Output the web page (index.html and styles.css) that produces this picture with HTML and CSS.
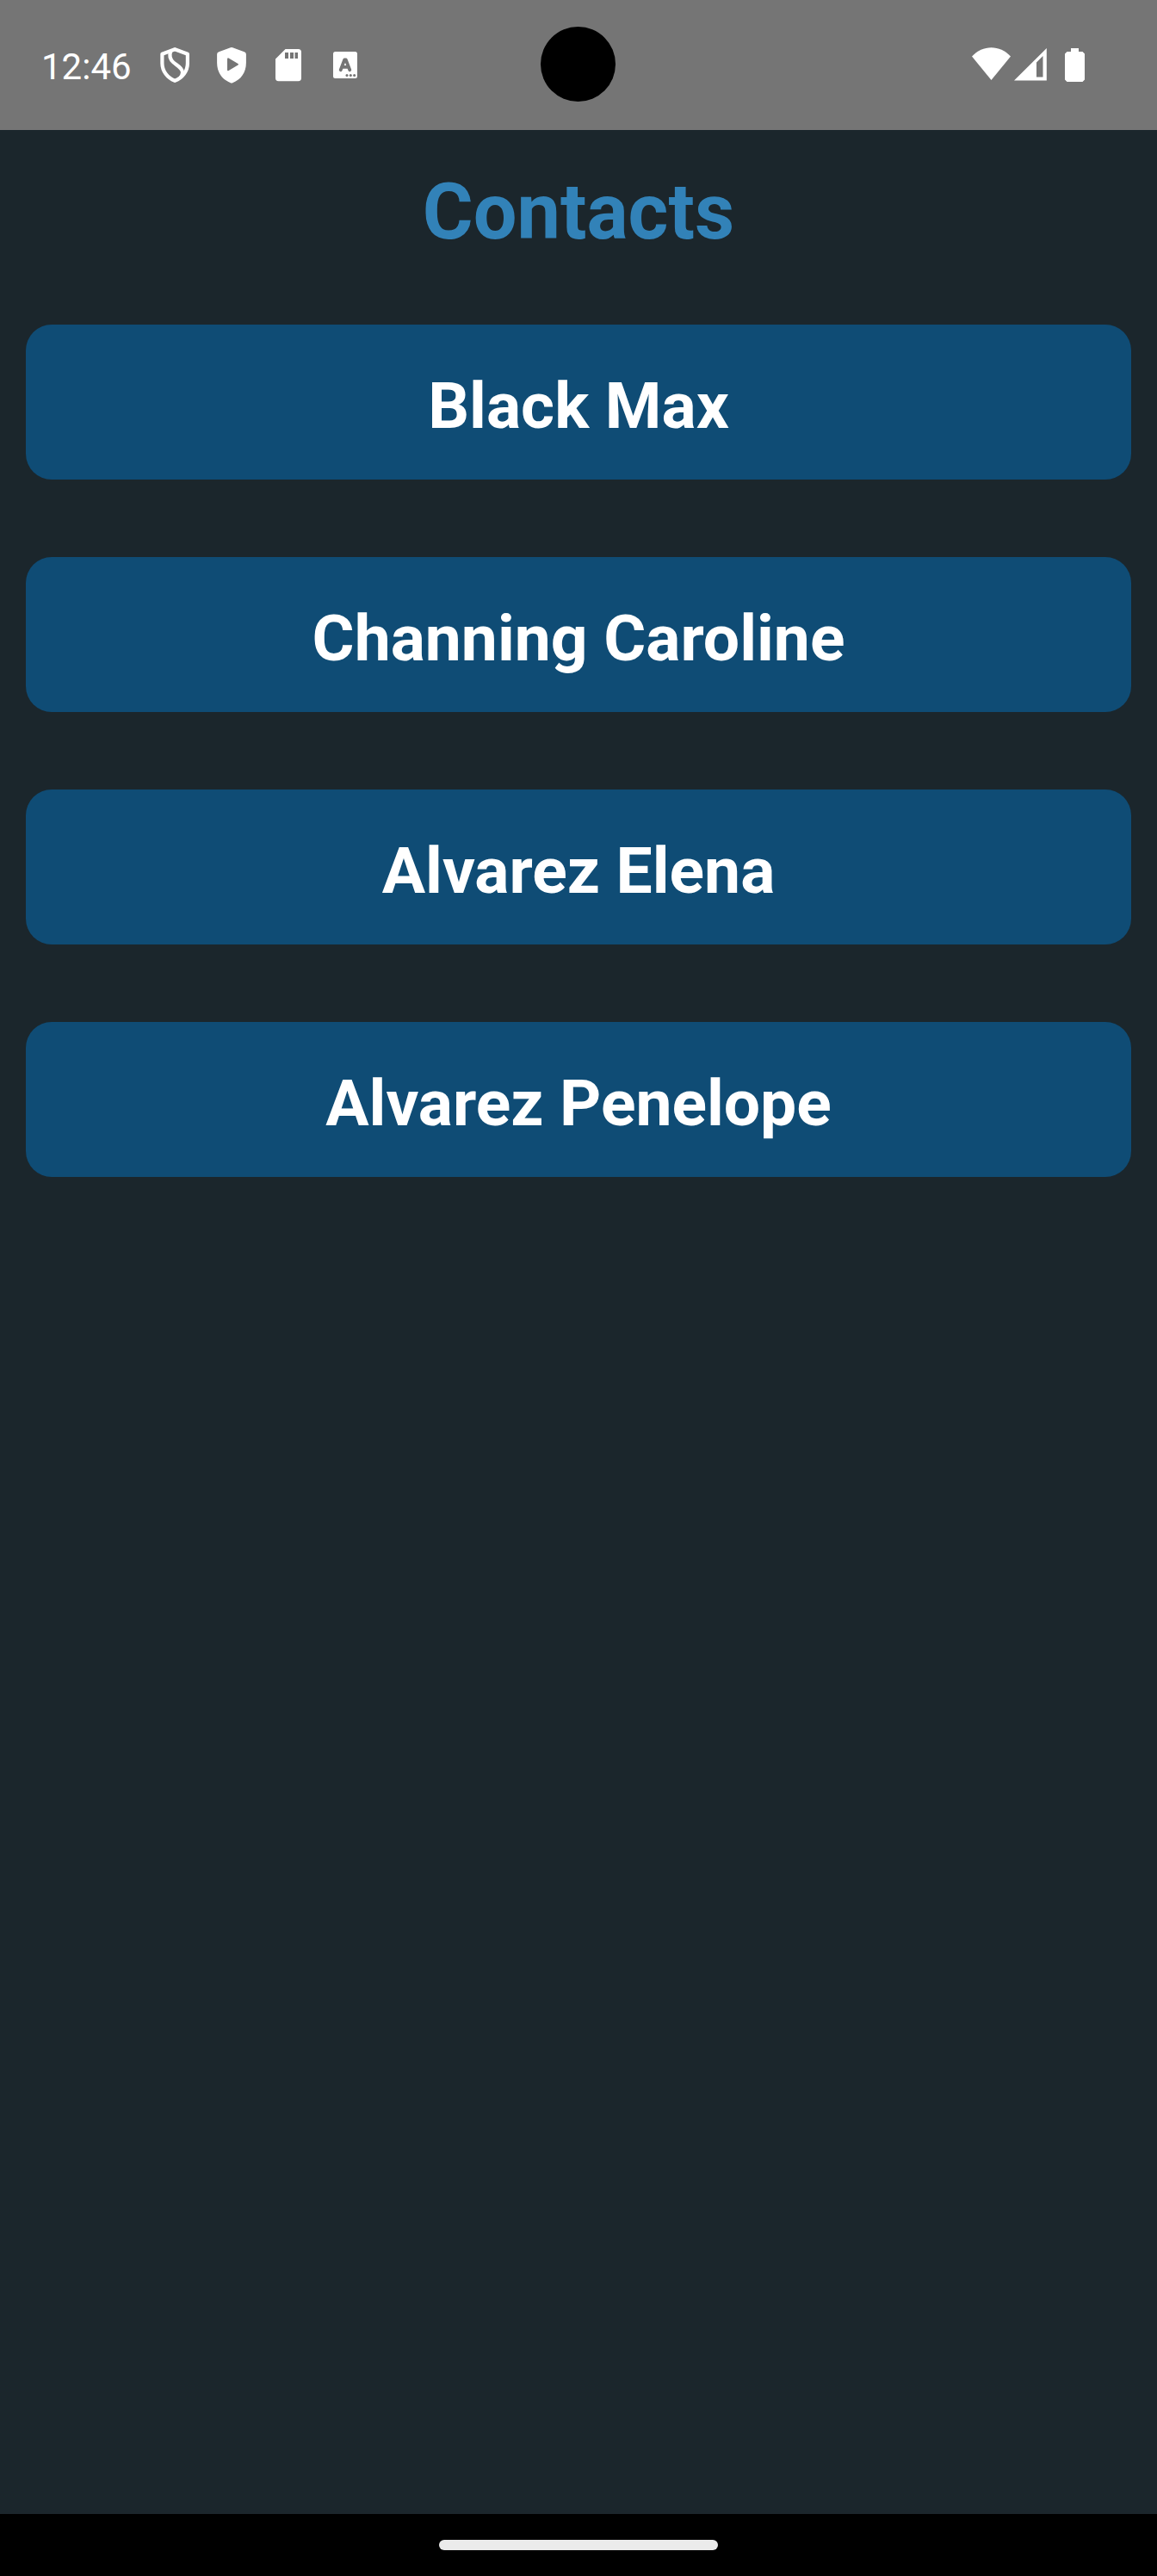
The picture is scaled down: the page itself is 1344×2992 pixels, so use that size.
FILE: index.html
```html
<!DOCTYPE html>
<html lang="en">
<head>
<meta charset="utf-8">
<title>Contacts</title>
<link rel="stylesheet" href="styles.css">
</head>
<body>
<div class="screen">
  <header class="status-bar">
    <span class="clock">12:46</span>
    <div class="notifications">
      <svg class="notification-icon" viewBox="0 0 66 66" fill="none" stroke="#fff" stroke-width="4.200" stroke-linejoin="round">
        <path d="M33.100 15.200 18.400 20.800V31.500C18.400 40.500 24.500 48.500 33.100 51.800C42 48.500 47.900 40.500 47.900 31.500V20.800Z"/>
        <path d="M28.500 17C26.500 22 27.500 27 31.500 30.500C35.500 34 42.500 37.500 42 42.500C41.800 44.500 41 46.500 39.500 48"/>
      </svg>
      <svg class="notification-icon" viewBox="0 0 66 66">
        <path fill="#fff" fill-rule="evenodd" d="M31.800 13.200Q33 12.700 34.200 13.200L47.800 18.200Q49.900 19 49.900 21V31C49.900 42 44 50.500 34.200 54.200Q33 54.700 31.800 54.200C22 50.500 16.100 42 16.100 31V21Q16.100 19 18.200 18.200ZM28 27V39Q28 40.800 29.600 39.900L40.500 33.400Q41.600 32.700 40.500 31.900L29.600 25.500Q28 24.700 28 27Z"/>
      </svg>
      <svg class="notification-icon" viewBox="0 0 66 66">
        <path fill="#fff" fill-rule="evenodd" d="M29.500 15H44.500Q48 15 48 18.500V48.500Q48 52.300 44.500 52.300H21.500Q18 52.300 18 48.500V26.500ZM29 19V26H33V19ZM35 19V26H39V19ZM40.500 19V26H44V19Z"/>
      </svg>
      <svg class="notification-icon" viewBox="0 0 66 66">
        <rect x="19" y="18" width="28" height="31" rx="2.500" fill="#fff"/>
        <path d="M27.700 39.300 32.200 27.500H33.800L38.300 39.300M29.500 35.800H36.500" fill="none" stroke="#757575" stroke-width="3.800" stroke-linecap="round" stroke-linejoin="round"/>
        <g fill="#757575"><circle cx="35" cy="45.500" r="1.500"/><circle cx="39.300" cy="45.500" r="1.500"/><circle cx="43.600" cy="45.500" r="1.500"/></g>
      </svg>
    </div>
    <div class="camera"></div>
    <div class="system-icons">
      <svg class="wifi" viewBox="0 0 45 40"><path fill="#fff" d="M0 10.600C12.500-3.200 32.500-3.200 45 10.600L22.500 38Z"/></svg>
      <svg class="signal" viewBox="0 0 38 40"><path fill="#fff" fill-rule="evenodd" d="M0 38.600 37.800 1V38.600ZM26 17.500V34.500H33.500V10Z"/></svg>
      <svg class="battery" viewBox="0 0 23 40"><path fill="#fff" d="M7 1H16V5H20.500L23 7.500V37.500L20.500 40H2.500L0 37.500V7.500L2.500 5H7Z"/></svg>
    </div>
  </header>
  <main class="content">
    <h1 class="title">Contacts</h1>
    <ul class="contacts">
      <li class="contact">Black Max</li>
      <li class="contact">Channing Caroline</li>
      <li class="contact">Alvarez Elena</li>
      <li class="contact">Alvarez Penelope</li>
    </ul>
  </main>
  <footer class="navigation"><div class="handle"></div></footer>
</div>
</body>
</html>
```
FILE: styles.css
```css
* {
  box-sizing: border-box;
}

body {
  margin: 0;
  font-family: Roboto, sans-serif;
  background: #1b262c;
}

.screen {
  display: flex;
  flex-direction: column;
  width: 1344px;
  height: 2992px;
}

.status-bar {
  position: relative;
  display: flex;
  align-items: flex-start;
  height: 151px;
  padding: 42px 84px 0 48px;
  background: #757575;
}

.clock {
  width: 122px;
  padding-top: 11px;
  font-size: 42px;
  line-height: 49px;
  color: #fff;
}

.notifications {
  display: flex;
}

.notification-icon {
  width: 66px;
  height: 66px;
}

/* Front camera cutout over the status bar */
.camera {
  position: absolute;
  top: 31px;
  left: 628px;
  width: 87px;
  height: 87px;
  border-radius: 50%;
  background: #000;
}

.system-icons {
  display: flex;
  margin-left: auto;
  padding-top: 13px;
}

.system-icons svg {
  height: 40px;
}

.wifi {
  width: 45px;
}

.signal {
  width: 38px;
  margin: 0 21px 0 4px;
}

.battery {
  width: 23px;
}

.content {
  flex: 1;
  padding: 43px 30px 0;
}

.title {
  margin: 0 0 77px;
  font-size: 90px;
  font-weight: 700;
  line-height: 106px;
  text-align: center;
  color: #3282b8;
}

.contacts {
  display: flex;
  flex-direction: column;
  gap: 90px;
  margin: 0;
  padding: 0;
  list-style: none;
}

.contact {
  height: 180px;
  padding-top: 50px;
  border-radius: 30px;
  font-size: 75px;
  font-weight: 700;
  line-height: 88px;
  text-align: center;
  color: #fff;
  background: #0f4c75;
}

.navigation {
  display: flex;
  justify-content: center;
  height: 72px;
  padding-top: 30px;
  background: #000;
}

.handle {
  width: 324px;
  height: 12px;
  border-radius: 6px;
  background: #ebebeb;
}
```
